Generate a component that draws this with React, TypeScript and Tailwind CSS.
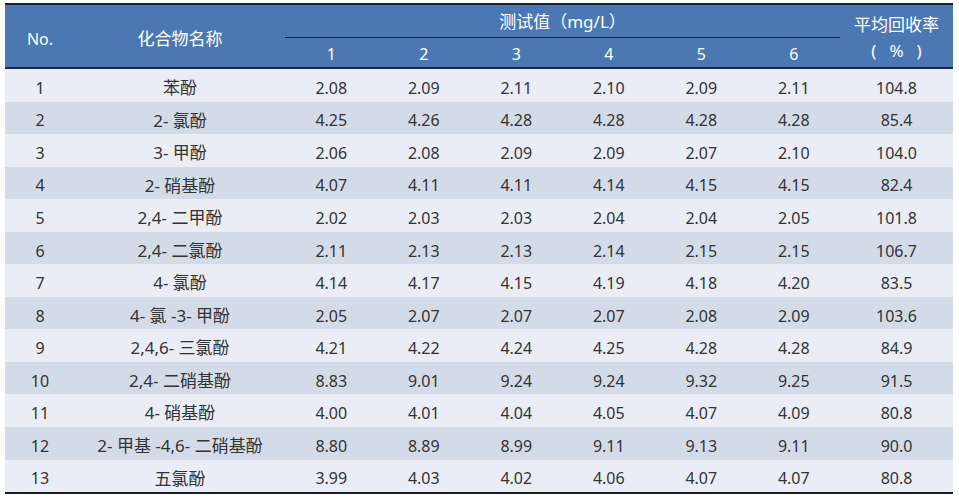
const rows: [string, string, string[], string][] = [
  ["1", "苯酚", ["2.08", "2.09", "2.11", "2.10", "2.09", "2.11"], "104.8"],
  ["2", "2- 氯酚", ["4.25", "4.26", "4.28", "4.28", "4.28", "4.28"], "85.4"],
  ["3", "3- 甲酚", ["2.06", "2.08", "2.09", "2.09", "2.07", "2.10"], "104.0"],
  ["4", "2- 硝基酚", ["4.07", "4.11", "4.11", "4.14", "4.15", "4.15"], "82.4"],
  ["5", "2,4- 二甲酚", ["2.02", "2.03", "2.03", "2.04", "2.04", "2.05"], "101.8"],
  ["6", "2,4- 二氯酚", ["2.11", "2.13", "2.13", "2.14", "2.15", "2.15"], "106.7"],
  ["7", "4- 氯酚", ["4.14", "4.17", "4.15", "4.19", "4.18", "4.20"], "83.5"],
  ["8", "4- 氯 -3- 甲酚", ["2.05", "2.07", "2.07", "2.07", "2.08", "2.09"], "103.6"],
  ["9", "2,4,6- 三氯酚", ["4.21", "4.22", "4.24", "4.25", "4.28", "4.28"], "84.9"],
  ["10", "2,4- 二硝基酚", ["8.83", "9.01", "9.24", "9.24", "9.32", "9.25"], "91.5"],
  ["11", "4- 硝基酚", ["4.00", "4.01", "4.04", "4.05", "4.07", "4.09"], "80.8"],
  ["12", "2- 甲基 -4,6- 二硝基酚", ["8.80", "8.89", "8.99", "9.11", "9.13", "9.11"], "90.0"],
  ["13", "五氯酚", ["3.99", "4.03", "4.02", "4.06", "4.07", "4.07"], "80.8"],
]

const cols = "grid grid-cols-[70px_210px_repeat(6,92.5px)_113px]"

export default function App() {
  return (
    <div className="w-[959px] h-[500px] bg-white pt-[3px] pl-[5px] font-['Noto_Sans','Noto_Sans_CJK_SC',sans-serif]">
      <div className="w-[948px] border-t-2 border-b-2 border-[#1c1f26]">
        {/* header */}
        <div className={`${cols} h-[64px] bg-[#4b78b3] text-white text-[16px] border-b-2 border-[#1d2b44]`}>
          <div className="row-span-2 flex items-center justify-center pt-[5px]">No.</div>
          <div className="row-span-2 flex items-center justify-center pt-[5px] text-[17px]">化合物名称</div>
          <div className="col-span-6 flex items-end justify-center pb-[3px] h-[33px] border-b border-[#142440] text-[17px]">
            测试值（mg/L）
          </div>
          <div className="row-span-2 flex flex-col items-center justify-center leading-[26px] pt-[4px] text-[17px]">
            <span>平均回收率</span>
            <span className="flex gap-[13px]">
              <span>(</span>
              <span>%</span>
              <span>)</span>
            </span>
          </div>
          {["1", "2", "3", "4", "5", "6"].map((n) => (
            <div key={n} className="flex items-center justify-center h-[29px] pt-[2px]">
              {n}
            </div>
          ))}
        </div>

        {/* body */}
        {rows.map(([no, name, vals, avg], i) => (
          <div
            key={no}
            className={`${cols} h-[32.55px] pt-[5px] items-center text-[16px] text-[#333333] ${
              i % 2 === 0 ? "bg-[#eaedf5]" : "bg-[#d4dbe8]"
            }`}
          >
            <div className="text-center">{no}</div>
            <div className="text-center text-[17px]">{name}</div>
            {vals.map((v, j) => (
              <div key={j} className="text-center">
                {v}
              </div>
            ))}
            <div className="text-center">{avg}</div>
          </div>
        ))}
      </div>
    </div>
  )
}
